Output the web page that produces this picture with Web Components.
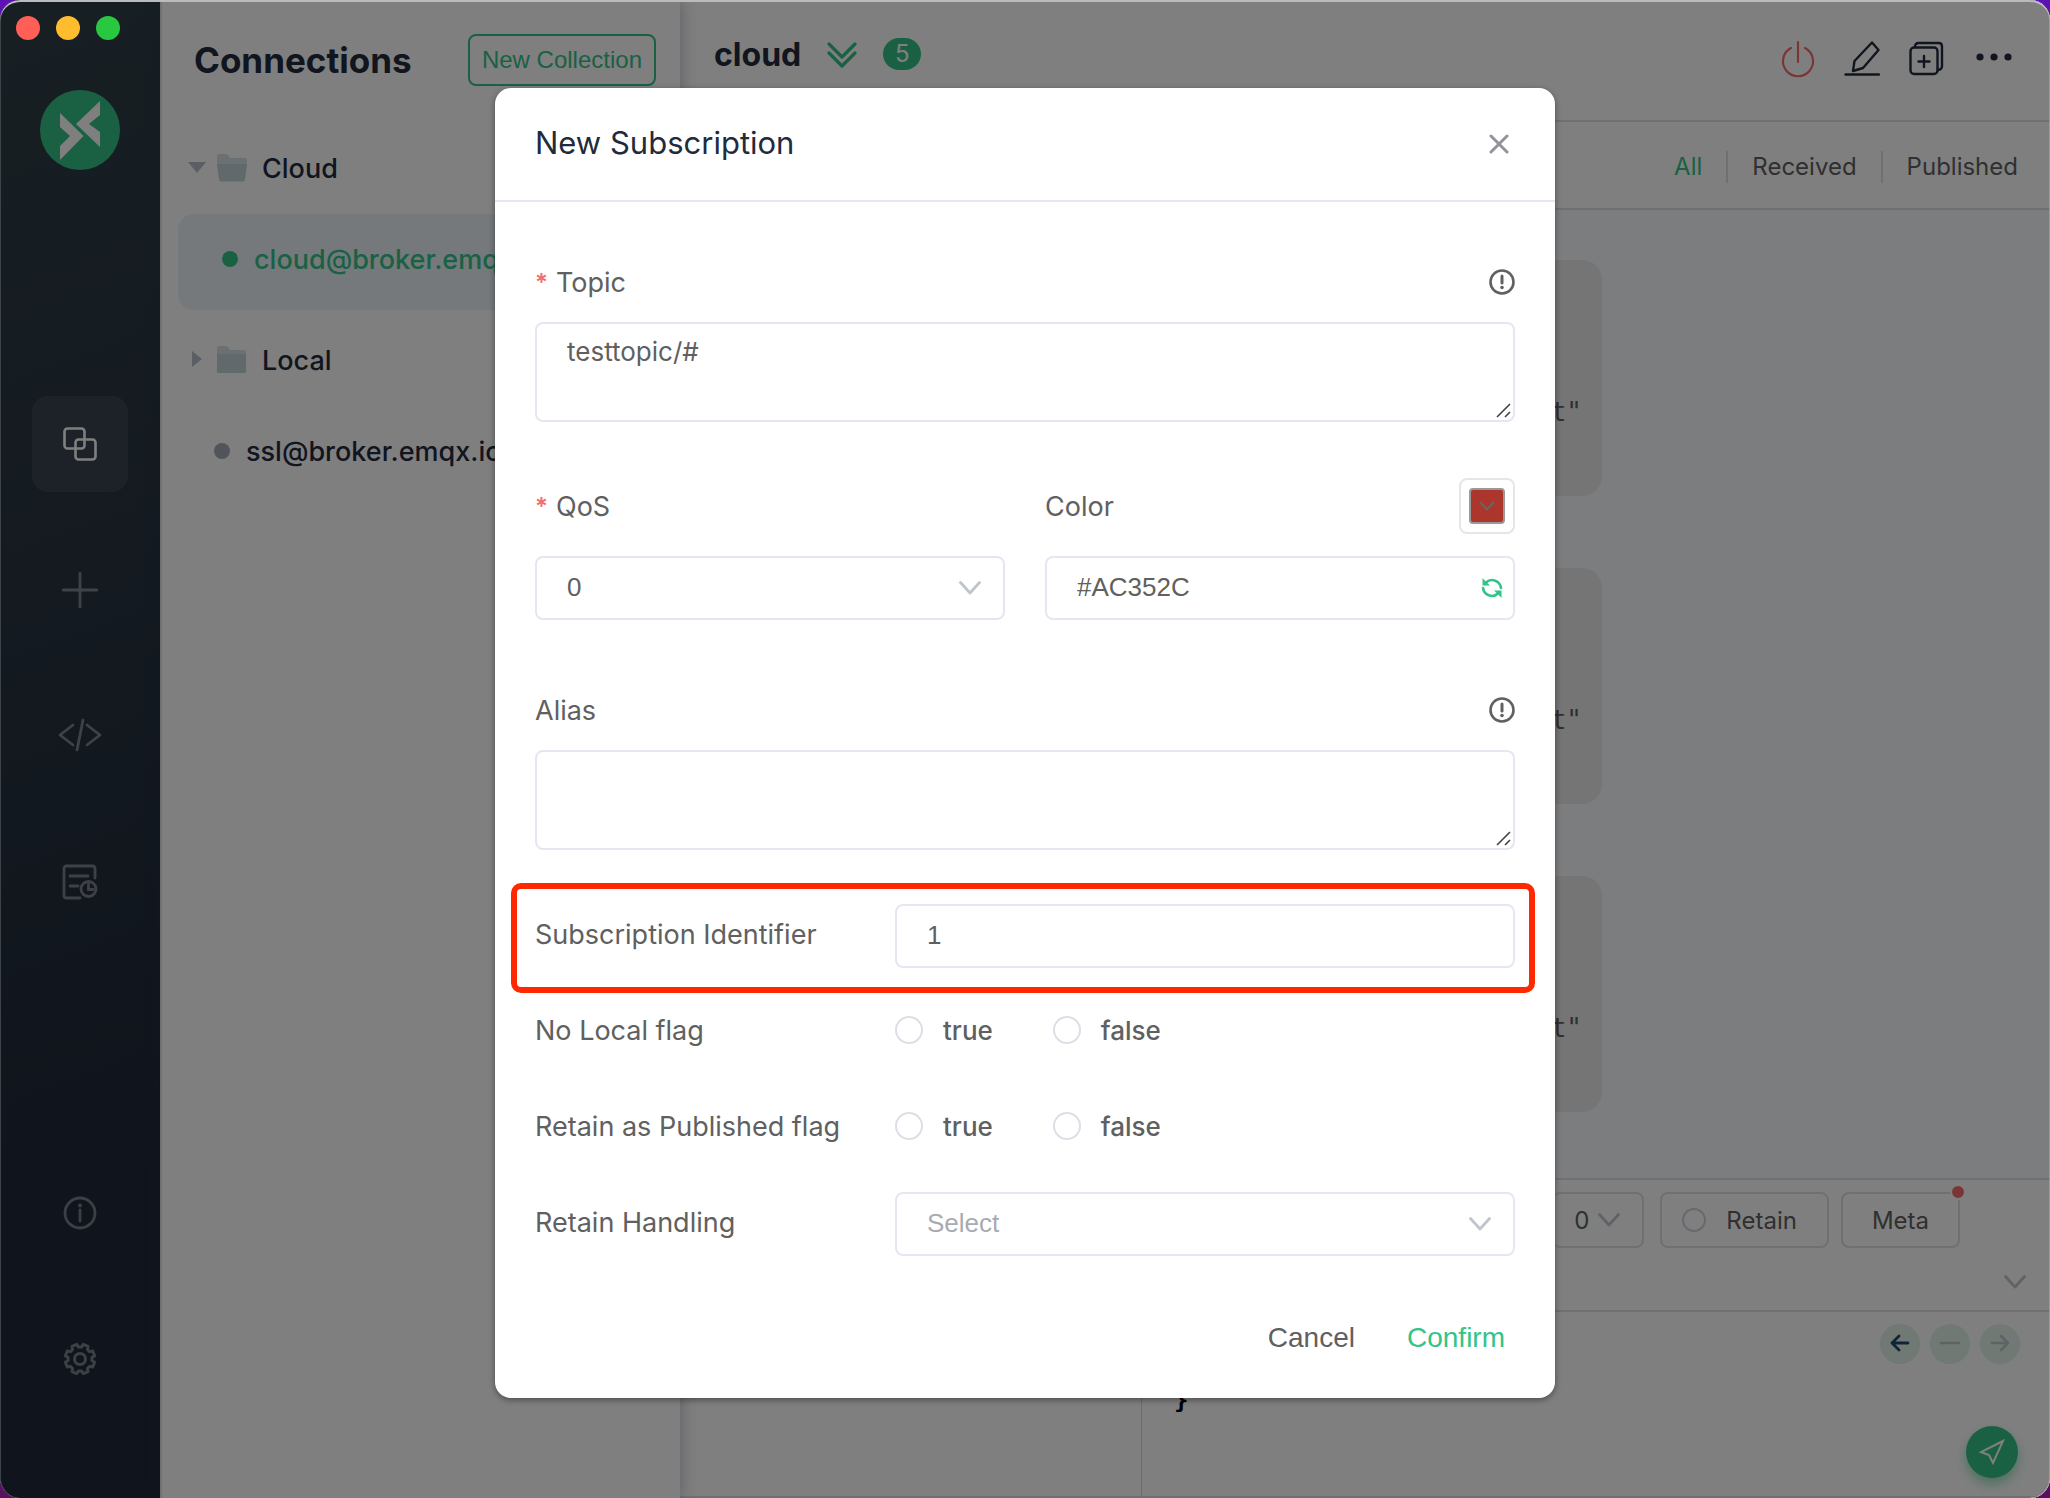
<!DOCTYPE html>
<html lang="en">
<head>
<meta charset="utf-8">
<title>MQTTX</title>
<style>
    html {
        height: 100%;
    }

    body {
        min-height: 100%;
        margin: 0;
        display: flex;
        background: linear-gradient(180deg, #5d12b4, #5a1060);
        font-family: Inter, "Liberation Sans", sans-serif;
        color: #606266;
    }
</style>
</head>
<body>
<app-window>
    <nav-rail slot="rail"></nav-rail>
    <connection-pane slot="list">
        <tree-folder name="Cloud" open></tree-folder>
        <connection-item name="cloud@broker.emqx" active></connection-item>
        <tree-folder name="Local"></tree-folder>
        <connection-item name="ssl@broker.emqx.io"></connection-item>
    </connection-pane>
    <session-view slot="main">
        <message-bubble>t"</message-bubble>
        <message-bubble>t"</message-bubble>
        <message-bubble>t"</message-bubble>
        <message-composer slot="composer"></message-composer>
    </session-view>
    <app-dialog slot="dialog" heading="New Subscription">
        <text-area label="Topic" value="testtopic/#" required></text-area>
        <field-pair>
            <select-field label="QoS" value="0" required></select-field>
            <color-field label="Color" value="#AC352C"></color-field>
        </field-pair>
        <text-area label="Alias" value=""></text-area>
        <inline-rows>
            <number-row label="Subscription Identifier" value="1"></number-row>
            <radio-row label="No Local flag"></radio-row>
            <radio-row label="Retain as Published flag"></radio-row>
            <select-field label="Retain Handling" value="Select" placeholder inline></select-field>
        </inline-rows>
    </app-dialog>
</app-window>

<script>
const icons = {
    logo: [80, 80, '<circle cx="40" cy="40" r="40" fill="#34c388"/><path fill="#fff" d="M20 23 43.5 46 20 70V56L30 46 20 37zM60 11V25L49 34 60 42V57L36 34z"/>'],
    connections: [36, 36, '<g fill="none" stroke="currentColor" stroke-width="2.6"><rect x="2.5" y="2.5" width="20" height="20" rx="3"/><rect x="13.5" y="13.5" width="20" height="20" rx="3"/></g>'],
    plus: [36, 36, '<path fill="none" stroke="currentColor" stroke-width="2.8" stroke-linecap="round" d="M18 1V35M1 18H35"/>'],
    code: [44, 36, '<path fill="none" stroke="currentColor" stroke-width="2.8" stroke-linecap="round" stroke-linejoin="round" d="M15 7 2 17 15 27M29 7 42 17 29 27M25 2 19 32"/>'],
    log: [36, 36, '<g fill="none" stroke="currentColor" stroke-width="2.8" stroke-linecap="round"><path d="M33 14V4.5Q33 2 30.5 2H4.5Q2 2 2 4.500V31.5Q2 34 4.5 34H18M8 12H26M8 22H16"/><circle cx="26.500" cy="25" r="7.5"/><path d="M26.5 20.500V25.5H31"/></g>'],
    info: [36, 36, '<g fill="none" stroke="currentColor" stroke-width="2.8"><circle cx="18" cy="18" r="15"/><path stroke-linecap="round" d="M18 15V26"/></g><circle cx="18" cy="10.5" r="2" fill="currentColor"/>'],
    gear: [36, 36, ''],
    folder: [32, 30, '<path fill="#d6e2e6" d="M1 3Q1 1 3 1H11L14 5H28Q30 5 30 7V28H1z"/><path fill="#c2d2d8" d="M1 9H30V26Q30 28 28 28H3Q1 28 1 26z"/>'],
    folderOpen: [32, 30, '<path fill="#d6e2e6" d="M1 3Q1 1 3 1H11L14 5H29Q31 5 31 7V12H1z"/><path fill="#c2d2d8" d="M1 11H31L29 27Q29 28.5 27 28.5H5Q3 28.5 3 27z"/>'],
    down: [18, 12, '<path fill="#b6bcc8" d="M0 0H18L9 11z"/>'],
    right: [18, 18, '<path fill="#b6bcc8" d="M4 0V16L14 8z"/>'],
    doubleDown: [30, 28, '<path fill="none" stroke="currentColor" stroke-width="3.2" stroke-linecap="round" stroke-linejoin="round" d="M2 4 15 17 28 4M2 13 15 26 28 13"/>'],
    power: [36, 38, '<path fill="none" stroke="#f56c6c" stroke-width="2.2" stroke-linecap="round" d="M11 8A15 15 0 1 0 25 8M18 2V22"/>'],
    edit: [36, 38, '<path fill="none" stroke="currentColor" stroke-width="2.4" stroke-linecap="round" stroke-linejoin="round" d="M1.5 34.5H35M28 2.500 34.5 10 19 28 9 31 10.5 21z"/>'],
    duplicate: [36, 38, '<g fill="none" stroke="currentColor" stroke-width="2.4" stroke-linecap="round"><rect x="2.5" y="7.5" width="27" height="26.5" rx="3.5"/><path d="M7 7Q7 3 10.5 3H31Q34 3 34 6.500V26Q34 29.500 30 30M16 16V27M10.500 21.5H21.5"/></g>'],
    more: [40, 38, '<g fill="currentColor"><circle cx="8" cy="17" r="3.6"/><circle cx="22" cy="17" r="3.6"/><circle cx="36" cy="17" r="3.6"/></g>'],
    close: [20, 20, '<path fill="none" stroke="#909399" stroke-width="3" stroke-linecap="round" d="M2 2 18 18M18 2 2 18"/>'],
    help: [26, 26, '<circle cx="13" cy="13" r="11.5" fill="none" stroke="#606060" stroke-width="2.6"/><path fill="none" stroke="#606060" stroke-width="3" stroke-linecap="round" d="M13 7V14"/><circle cx="13" cy="18.5" r="1.8" fill="#606060"/>'],
    chevron: [22, 14, '<path fill="none" stroke="#c0c4cc" stroke-width="2.8" stroke-linecap="round" stroke-linejoin="round" d="M1.5 1.5 11 12 20.5 1.5"/>'],
    smallChevron: [16, 10, '<path fill="none" stroke="#666" stroke-width="2" stroke-linecap="round" stroke-linejoin="round" d="M1.5 1.5 8 8.5 14.5 1.5"/>'],
    refresh: [22, 22, '<path fill="none" stroke="#34c388" stroke-width="2.6" stroke-linecap="round" d="M5 5.5A9 9 0 0 1 20 11M17 16.5A9 9 0 0 1 2 11"/><path fill="#34c388" d="M1.500 1V8.5H9L6.5 6 3.8 3.4zM20.5 21V13.5H13L15.5 16 18.2 18.6z"/>'],
    back: [24, 24, '<path fill="none" stroke="#1f4a6b" stroke-width="2.8" stroke-linecap="round" stroke-linejoin="round" d="M20 11H4M11 4 4 11 11 18"/>'],
    minus: [24, 24, '<path fill="none" stroke="#c0c4cc" stroke-width="2.4" stroke-linecap="round" d="M3 11H21"/>'],
    forward: [24, 24, '<path fill="none" stroke="#c0c4cc" stroke-width="2.6" stroke-linecap="round" stroke-linejoin="round" d="M4 11H20M13 4 20 11 13 18"/>'],
    send: [28, 28, '<path fill="none" stroke="#fff" stroke-width="2" stroke-linejoin="miter" d="M25 3 3 14 11 17 15 25z"/>']
};

// eight rounded teeth around the hub
function gearPath() {
    const points = [];
    for (let i = 0; i < 8; i++) {
        const mid = i * Math.PI / 4 + Math.PI / 8;
        [[-0.27, 12], [-0.17, 15], [0.17, 15], [0.27, 12]].forEach(([turn, r]) => {
            points.push((18 + r * Math.cos(mid + turn)).toFixed(1) + ' ' + (18 + r * Math.sin(mid + turn)).toFixed(1));
        });
    }
    return 'M' + points.join('L') + 'z';
}
icons.gear[2] = `<g fill="none" stroke="currentColor" stroke-width="3" stroke-linejoin="round"><path d="${gearPath()}"/><circle cx="18" cy="18" r="5.5"/></g>`;

function icon(name) {
    const [w, h, body] = icons[name];
    return `<svg width="${w}" height="${h}" viewBox="0 0 ${w} ${h}" aria-hidden="true">${body}</svg>`;
}

const base = `
    * {
        box-sizing: border-box;
    }

    :host {
        display: block;
        box-sizing: border-box;
    }

    svg {
        display: block;
        flex: none;
    }

    button {
        padding: 0;
        border: 0;
        background: none;
        color: inherit;
        font: inherit;
    }
`;

const fieldStyle = `
    label, .label {
        display: flex;
        align-items: center;
        height: 80px;
        font-size: 27px;
        color: #606060;
    }

    .star {
        width: 21px;
        color: #f56c6c;
        font-size: 24px;
        font-weight: 600;
    }

    .head {
        display: flex;
        align-items: center;
        justify-content: space-between;
    }

    input[type="text"], select, textarea {
        display: block;
        width: 100%;
        height: 64px;
        margin: 0;
        padding: 0 30px 2px;
        border: 2px solid #e4e7f2;
        border-radius: 8px;
        outline: 0;
        background: #fff;
        color: #606060;
        font-family: "Liberation Sans", Arial, sans-serif;
        font-size: 26px;
        appearance: none;
    }

    .control {
        display: grid;
        align-items: center;
    }

    .control > * {
        grid-area: 1 / 1;
    }

    .control svg {
        justify-self: end;
        margin-right: 24px;
        pointer-events: none;
    }

    .row {
        display: grid;
        grid-template-columns: 360px 1fr;
        align-items: center;
        height: 96px;
    }

    .row label, .row .label {
        padding-bottom: 4px;
    }
`;

class BaseElement extends HTMLElement {
    constructor() {
        super();
        this.attachShadow({mode: 'open'});
        this.shadowRoot.innerHTML = `<style>${base}</style>` + this.render();
    }

    attr(name) {
        return this.getAttribute(name) || '';
    }
}

class AppWindow extends BaseElement {
    render() {
        return `
<style>
    :host {
        position: relative;
        flex: 1;
        display: grid;
        grid-template-columns: 160px 520px 1fr;
        overflow: hidden;
        border-radius: 20px;
        background: #fff;
    }

    .overlay {
        position: absolute;
        inset: 0;
        z-index: 5;
        padding: 88px 0;
        border-radius: 20px;
        background: rgba(0, 0, 0, .5);
        box-shadow: inset 0 2px 0 #b9bcbb, inset -1px 0 0 #9a9a9a, inset 1px 0 0 #3c4448;
    }

    .lights {
        position: absolute;
        left: 16px;
        top: 16px;
        z-index: 6;
        display: flex;
        gap: 16px;
    }

    .lights button {
        width: 24px;
        height: 24px;
        border-radius: 50%;
    }
</style>
<slot name="rail"></slot>
<slot name="list"></slot>
<slot name="main"></slot>
<div class="overlay"><slot name="dialog"></slot></div>
<div class="lights">
    <button aria-label="Close window" style="background:#ff5f57"></button>
    <button aria-label="Minimize window" style="background:#febc2e"></button>
    <button aria-label="Zoom window" style="background:#28c840"></button>
</div>`;
    }
}

class NavRail extends BaseElement {
    render() {
        return `
<style>
    :host {
        display: flex;
        flex-direction: column;
        align-items: center;
        padding: 90px 0 91px;
        background: linear-gradient(160deg, #303f47, #20293a 80%);
        color: rgba(255, 255, 255, .4);
    }

    nav {
        display: flex;
        flex-direction: column;
        gap: 50px;
    }

    .top {
        margin-top: 226px;
    }

    .bottom {
        margin-top: auto;
    }

    button {
        display: grid;
        place-items: center;
        width: 96px;
        height: 96px;
        border-radius: 16px;
    }

    .active {
        background: rgba(255, 255, 255, .07);
        color: #fff;
    }
</style>
${icon('logo')}
<nav class="top">
    <button class="active" aria-label="Connections">${icon('connections')}</button>
    <button aria-label="New">${icon('plus')}</button>
    <button aria-label="Scripts">${icon('code')}</button>
    <button aria-label="Log">${icon('log')}</button>
</nav>
<nav class="bottom">
    <button aria-label="About">${icon('info')}</button>
    <button aria-label="Settings">${icon('gear')}</button>
</nav>`;
    }
}

class ConnectionPane extends BaseElement {
    render() {
        return `
<style>
    :host {
        position: relative;
        z-index: 1;
        min-width: 0;
        border-left: 2px solid #e2e2e8;
        background: #fff;
        box-shadow: 1px 0 16px rgba(30, 45, 80, .3);
    }

    header {
        display: flex;
        align-items: center;
        justify-content: space-between;
        height: 118px;
        padding: 2px 24px 0 32px;
    }

    h1 {
        margin: 0;
        color: #222b3c;
        font-size: 35px;
        font-weight: 700;
    }

    button {
        height: 52px;
        padding: 0 12px;
        border: 2px solid #34c388;
        border-radius: 8px;
        color: #34c388;
        font-family: "Liberation Sans", Arial, sans-serif;
        font-size: 24px;
    }
</style>
<header>
    <h1>Connections</h1>
    <button>New Collection</button>
</header>
<slot></slot>`;
    }
}

class TreeFolder extends BaseElement {
    render() {
        const open = this.hasAttribute('open');
        return `
<style>
    :host {
        display: flex;
        align-items: center;
        height: 96px;
        margin: 0 16px;
        padding: 4px 10px 0;
        color: #222b3c;
        font-size: 27px;
        font-weight: 500;
    }

    .folder {
        margin: 0 14px 0 10px;
    }
</style>
${icon(open ? 'down' : 'right')}
<span class="folder">${icon(open ? 'folderOpen' : 'folder')}</span>
<span>${this.attr('name')}</span>`;
    }
}

class ConnectionItem extends BaseElement {
    render() {
        return `
<style>
    :host {
        display: flex;
        align-items: center;
        gap: 16px;
        height: 96px;
        margin: 0 16px;
        padding: 0 0 6px 36px;
        border-radius: 16px;
        color: #222b3c;
        font-size: 27px;
        font-weight: 500;
        white-space: nowrap;
    }

    :host([active]) {
        padding-left: 44px;
        background: #eaf2f8;
        color: #34c388;
    }

    i {
        width: 16px;
        height: 16px;
        border-radius: 50%;
        background: #a2a8b5;
    }

    :host([active]) i {
        background: #34c388;
    }
</style>
<i></i><span>${this.attr('name')}</span>`;
    }
}

class SessionView extends BaseElement {
    render() {
        return `
<style>
    :host {
        display: flex;
        flex-direction: column;
        min-width: 0;
        background: #fff;
    }

    header, .filters {
        display: flex;
        align-items: center;
        border-bottom: 2px solid #dfe0e8;
    }

    header {
        justify-content: space-between;
        height: 122px;
        padding: 0 38px 0 34px;
        color: #222b3c;
    }

    .name, .actions {
        display: flex;
        align-items: center;
    }

    .name {
        gap: 26px;
        padding-bottom: 12px;
        color: #34c388;
    }

    .actions {
        gap: 28px;
        padding-bottom: 2px;
    }

    h2 {
        margin: 0;
        color: #222b3c;
        font-size: 32px;
        font-weight: 700;
    }

    .count {
        width: 38px;
        border-radius: 16px;
        background: #34c388;
        color: #fff;
        font-size: 24px;
        line-height: 32px;
        text-align: center;
    }

    .filters {
        justify-content: flex-end;
        height: 88px;
        padding: 4px 8px 0 0;
        font-size: 24px;
    }

    .filters button {
        padding: 0 24px;
        color: #606060;
        line-height: 32px;
    }

    .filters button + button {
        border-left: 2px solid #dfe0e8;
    }

    .filters .on {
        color: #34c388;
    }

    .messages {
        flex: 1;
        display: flex;
        flex-direction: column;
        gap: 72px;
        padding: 50px 32px 66px;
        background: #f8fafd;
    }
</style>
<header>
    <div class="name"><h2>cloud</h2>${icon('doubleDown')}<span class="count">5</span></div>
    <div class="actions">
        <button aria-label="Disconnect">${icon('power')}</button>
        <button aria-label="Edit">${icon('edit')}</button>
        <button aria-label="New window">${icon('duplicate')}</button>
        <button aria-label="More">${icon('more')}</button>
    </div>
</header>
<div class="filters">
    <button class="on">All</button>
    <button>Received</button>
    <button>Published</button>
</div>
<div class="messages"><slot></slot></div>
<slot name="composer"></slot>`;
    }
}

class MessageBubble extends BaseElement {
    render() {
        return `
<style>
    :host {
        width: 890px;
        height: 236px;
        padding: 134px 20px 0;
        border-radius: 20px;
        background: #eaebed;
        color: #606060;
        font: 26px/36px "DejaVu Sans Mono", monospace;
        text-align: right;
    }
</style>
<slot></slot>`;
    }
}

class MessageComposer extends BaseElement {
    render() {
        return `
<style>
    :host {
        border-top: 2px solid #dfe0e8;
        color: #606060;
        font-size: 24px;
    }

    .options {
        display: flex;
        justify-content: flex-end;
        padding: 12px 90px 0 0;
    }

    .options > * {
        height: 56px;
        border: 2px solid #dfe0e8;
        border-radius: 8px;
    }

    .qos {
        display: grid;
        align-items: center;
        width: 92px;
        margin-right: 16px;
    }

    .qos > * {
        grid-area: 1 / 1;
    }

    .qos svg {
        justify-self: end;
        margin-right: 22px;
        pointer-events: none;
    }

    select {
        width: 100%;
        padding: 0 20px;
        border: 0;
        background: none;
        color: inherit;
        font: inherit;
        appearance: none;
    }

    .retain {
        display: flex;
        align-items: center;
        gap: 20px;
        margin-right: 12px;
        padding: 0 30px 0 20px;
    }

    .retain input {
        width: 24px;
        height: 24px;
        margin: 0;
        border: 2px solid #d0d3dc;
        border-radius: 50%;
        appearance: none;
    }

    .meta {
        position: relative;
        padding: 0 29px;
    }

    .meta i {
        position: absolute;
        right: -8px;
        top: -10px;
        width: 16px;
        height: 16px;
        border: 2px solid #fff;
        border-radius: 50%;
        background: #f56c6c;
    }

    .collapse {
        display: flex;
        justify-content: flex-end;
        align-items: center;
        height: 64px;
        padding: 6px 24px 0 0;
        border-bottom: 2px solid #dfe0e8;
    }

    .editor {
        display: flex;
        height: 186px;
        border-bottom: 2px solid #dfe0e8;
    }

    .side {
        width: 462px;
        border-right: 1px solid #d8dae4;
    }

    pre {
        flex: 1;
        margin: 0;
        padding: 70px 32px 0;
        color: #000;
        font: bold 24px/36px "DejaVu Sans Mono", monospace;
    }

    .tools {
        display: flex;
        flex-direction: column;
        justify-content: space-between;
        align-items: flex-end;
        padding: 12px 30px 18px 0;
    }

    .history {
        display: flex;
        gap: 10px;
    }

    .history button, .send {
        display: grid;
        place-items: center;
        width: 40px;
        height: 40px;
        border-radius: 50%;
        background: #e0f2e6;
    }

    .tools .send {
        width: 52px;
        height: 52px;
        margin-right: 2px;
        background: #34c388;
        box-shadow: 0 6px 12px rgba(52, 195, 136, .5);
    }
</style>
<div class="options">
    <div class="qos"><select aria-label="QoS"><option>0</option></select>${icon('chevron')}</div>
    <label class="retain"><input type="radio">Retain</label>
    <button class="meta">Meta<i></i></button>
</div>
<div class="collapse"><button aria-label="Collapse">${icon('chevron')}</button></div>
<div class="editor">
    <div class="side"></div>
    <pre>}</pre>
    <div class="tools">
        <div class="history">
            <button aria-label="Previous">${icon('back')}</button>
            <button aria-label="Clear">${icon('minus')}</button>
            <button aria-label="Next">${icon('forward')}</button>
        </div>
        <button class="send" aria-label="Send">${icon('send')}</button>
    </div>
</div>`;
    }
}

class AppDialog extends BaseElement {
    render() {
        return `
<style>
    :host {
        width: 1060px;
        margin: 0 auto;
        border-radius: 16px;
        background: #fff;
        box-shadow: 0 2px 6px rgba(0, 0, 0, .4);
    }

    header {
        display: flex;
        align-items: center;
        justify-content: space-between;
        height: 114px;
        padding: 0 46px 0 40px;
        border-bottom: 2px solid #e4e7f2;
    }

    h2 {
        margin: 0;
        padding-bottom: 4px;
        color: #222b3c;
        font-size: 31px;
        font-weight: 400;
    }

    .body {
        padding: 40px 40px 0;
    }

    footer {
        display: flex;
        justify-content: flex-end;
        gap: 52px;
        padding: 46px 50px 40px;
        color: #606060;
        font: 28px/40px "Liberation Sans", Arial, sans-serif;
    }

    .confirm {
        color: #34c388;
    }
</style>
<header>
    <h2>${this.attr('heading')}</h2>
    <button aria-label="Close">${icon('close')}</button>
</header>
<div class="body"><slot></slot></div>
<footer>
    <button>Cancel</button>
    <button class="confirm">Confirm</button>
</footer>`;
    }
}

class FieldPair extends BaseElement {
    render() {
        return `
<style>
    :host {
        display: grid;
        grid-template-columns: 1fr 1fr;
        gap: 40px;
        margin: 44px 0 50px;
    }
</style>
<slot></slot>`;
    }
}

class TextArea extends BaseElement {
    render() {
        return `
<style>
    ${fieldStyle}

    textarea {
        height: 100px;
        padding: 10px 30px;
        font-family: inherit;
        line-height: 36px;
        resize: none;
    }

    .control .grip {
        align-self: end;
        margin: 0 4px 4px 0;
    }
</style>
<div class="head">
    <label for="field">${this.hasAttribute('required') ? '<span class="star">*</span>' : ''}${this.attr('label')}</label>
    ${icon('help')}
</div>
<div class="control">
    <textarea id="field">${this.attr('value')}</textarea>
    <svg class="grip" width="15" height="15" viewBox="0 0 15 15"><path fill="none" stroke="#444" stroke-width="1.6" d="M1 14 14 1M9 14 14 9"/></svg>
</div>`;
    }
}

class SelectField extends BaseElement {
    render() {
        const inline = this.hasAttribute('inline');
        return `
<style>
    ${fieldStyle}

    :host([placeholder]) select {
        color: #a8abb2;
    }

    .stack label {
        margin-bottom: 10px;
    }
</style>
<div class="${inline ? 'row' : 'stack'}">
    <label for="field">${this.hasAttribute('required') ? '<span class="star">*</span>' : ''}${this.attr('label')}</label>
    <div class="control">
        <select id="field"><option>${this.attr('value')}</option></select>
        ${icon('chevron')}
    </div>
</div>`;
    }
}

class ColorField extends BaseElement {
    render() {
        return `
<style>
    ${fieldStyle}

    .head {
        margin-bottom: 10px;
    }

    .picker {
        display: grid;
        place-items: center;
        width: 56px;
        height: 56px;
        border: 2px solid #e6e6e6;
        border-radius: 8px;
    }

    .swatch {
        display: grid;
        place-items: center;
        width: 36px;
        height: 36px;
        border: 2px solid #999;
        border-radius: 4px;
        background: ${this.attr('value')};
    }

    .refresh {
        justify-self: end;
    }

    .control .refresh svg {
        margin-right: 12px;
    }
</style>
<div class="head">
    <label for="field">${this.attr('label')}</label>
    <button class="picker" aria-label="Pick a color"><span class="swatch">${icon('smallChevron')}</span></button>
</div>
<div class="control">
    <input type="text" id="field" value="${this.attr('value')}">
    <button class="refresh" aria-label="Random color">${icon('refresh')}</button>
</div>`;
    }
}

class InlineRows extends BaseElement {
    render() {
        return `
<style>
    :host {
        margin-top: 38px;
    }
</style>
<slot></slot>`;
    }
}

class NumberRow extends BaseElement {
    render() {
        return `
<style>
    ${fieldStyle}

    :host {
        position: relative;
    }

    /* marker drawn around the whole row */
    .mark {
        position: absolute;
        inset: -5px -20px -9px -24px;
        border: 6px solid #ff2800;
        border-radius: 10px;
        pointer-events: none;
    }
</style>
<div class="row">
    <label for="field">${this.attr('label')}</label>
    <input type="text" id="field" value="${this.attr('value')}">
</div>
<div class="mark"></div>`;
    }
}

class RadioRow extends BaseElement {
    render() {
        return `
<style>
    ${fieldStyle}

    .choices {
        display: flex;
        gap: 60px;
    }

    .choices label {
        gap: 20px;
        font-size: 26px;
        font-weight: 500;
    }

    input {
        width: 28px;
        height: 28px;
        margin: 0;
        border: 2px solid #dcdfe6;
        border-radius: 50%;
        background: #fff;
        appearance: none;
    }
</style>
<div class="row" role="radiogroup" aria-labelledby="name">
    <span class="label" id="name">${this.attr('label')}</span>
    <div class="choices">
        <label><input type="radio" name="flag">true</label>
        <label><input type="radio" name="flag">false</label>
    </div>
</div>`;
    }
}

customElements.define('app-window', AppWindow);
customElements.define('nav-rail', NavRail);
customElements.define('connection-pane', ConnectionPane);
customElements.define('tree-folder', TreeFolder);
customElements.define('connection-item', ConnectionItem);
customElements.define('session-view', SessionView);
customElements.define('message-bubble', MessageBubble);
customElements.define('message-composer', MessageComposer);
customElements.define('app-dialog', AppDialog);
customElements.define('field-pair', FieldPair);
customElements.define('text-area', TextArea);
customElements.define('select-field', SelectField);
customElements.define('color-field', ColorField);
customElements.define('inline-rows', InlineRows);
customElements.define('number-row', NumberRow);
customElements.define('radio-row', RadioRow);
</script>
</body>
</html>
